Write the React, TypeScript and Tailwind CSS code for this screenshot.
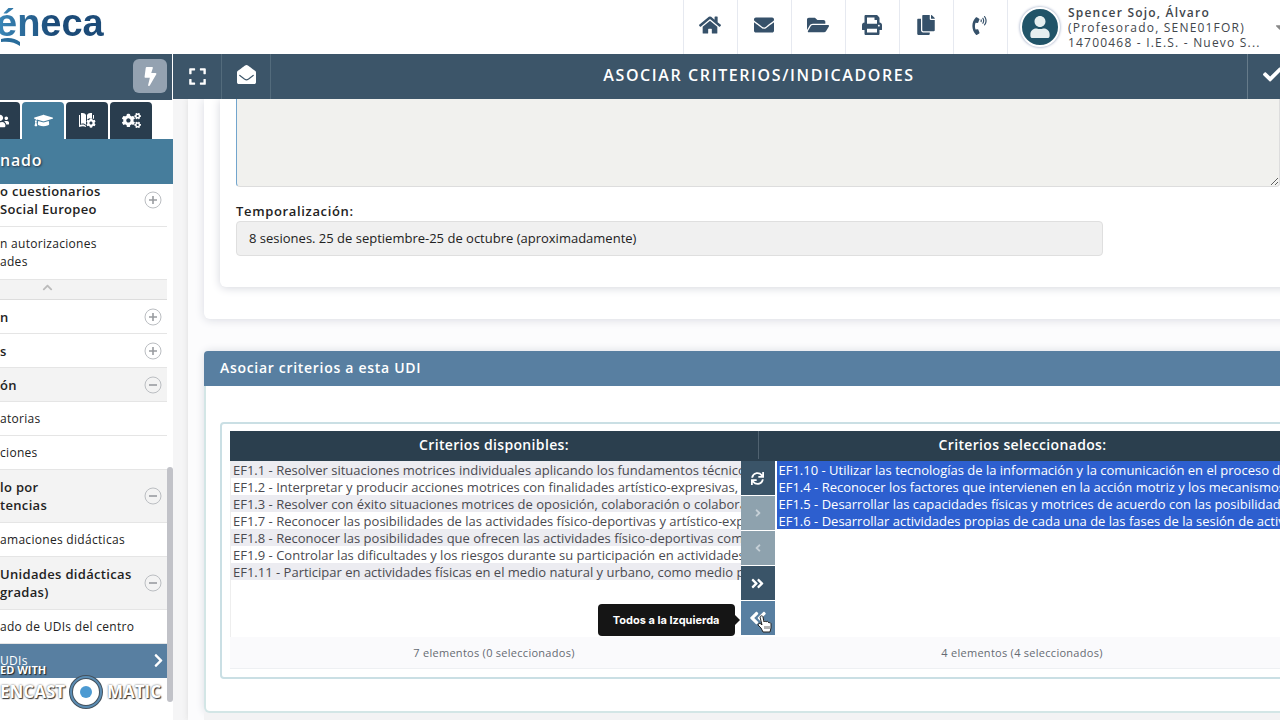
import { ReactNode, useState } from "react";
import {
  FaAngleDoubleLeft,
  FaAngleDoubleRight,
  FaAngleLeft,
  FaAngleRight,
  FaBolt,
  FaCaretDown,
  FaCheck,
  FaChevronRight,
  FaChevronUp,
  FaCog,
  FaCogs,
  FaCopy,
  FaEnvelope,
  FaEnvelopeOpen,
  FaExpand,
  FaFolderOpen,
  FaGraduationCap,
  FaHome,
  FaPhoneVolume,
  FaPrint,
  FaSync,
  FaUser,
  FaUsers,
} from "react-icons/fa";

type MenuItem = {
  lines: string[];
  kind: "group" | "open" | "link" | "active";
};

const topMenu: MenuItem[] = [
  { lines: ["o cuestionarios", "Social Europeo"], kind: "group" },
  { lines: ["n autorizaciones", "ades"], kind: "link" },
];

const mainMenu: MenuItem[] = [
  { lines: ["n"], kind: "group" },
  { lines: ["s"], kind: "group" },
  { lines: ["ón"], kind: "open" },
  { lines: ["atorias"], kind: "link" },
  { lines: ["ciones"], kind: "link" },
  { lines: ["lo por", "tencias"], kind: "open" },
  { lines: ["amaciones didácticas"], kind: "link" },
  { lines: ["Unidades didácticas", "gradas)"], kind: "open" },
  { lines: ["ado de UDIs del centro"], kind: "link" },
  { lines: ["UDIs"], kind: "active" },
];

const available = [
  "EF1.1 - Resolver situaciones motrices individuales aplicando los fundamentos técnicos",
  "EF1.2 - Interpretar y producir acciones motrices con finalidades artístico-expresivas,",
  "EF1.3 - Resolver con éxito situaciones motrices de oposición, colaboración o colaboración",
  "EF1.7 - Reconocer las posibilidades de las actividades físico-deportivas y artístico-expresivas",
  "EF1.8 - Reconocer las posibilidades que ofrecen las actividades físico-deportivas como",
  "EF1.9 - Controlar las dificultades y los riesgos durante su participación en actividades",
  "EF1.11 - Participar en actividades físicas en el medio natural y urbano, como medio para",
];

const chosen = [
  "EF1.10 - Utilizar las tecnologías de la información y la comunicación en el proceso de",
  "EF1.4 - Reconocer los factores que intervienen en la acción motriz y los mecanismos",
  "EF1.5 - Desarrollar las capacidades físicas y motrices de acuerdo con las posibilidades",
  "EF1.6 - Desarrollar actividades propias de cada una de las fases de la sesión de actividad",
];

const shortcuts = [
  { label: "Inicio", icon: <FaHome size={22} /> },
  { label: "Mensajes", icon: <FaEnvelope size={20} /> },
  { label: "Carpetas", icon: <FaFolderOpen size={22} /> },
  { label: "Imprimir", icon: <FaPrint size={20} /> },
  { label: "Copiar", icon: <FaCopy size={20} /> },
  { label: "Contacto", icon: <FaPhoneVolume size={19} /> },
];

export default function App() {
  return (
    <div className="relative flex h-screen flex-col overflow-hidden bg-white font-['Open_Sans','Noto_Sans',sans-serif] text-[13px] text-[#222]">
      <Header />
      <div className="flex min-h-0 flex-1">
        <Sidebar />
        <main className="flex min-w-0 flex-1 flex-col">
          <Toolbar />
          <Content />
        </main>
      </div>
      <Watermark />
    </div>
  );
}

function Header() {
  return (
    <header className="-mr-4 flex h-[54px] shrink-0 items-stretch">
      <a href="#inicio" aria-label="Séneca" className="relative block w-28">
        <span className="-ml-1 block bg-linear-to-r from-[#3b8abb] to-[#1c4b78] to-50% bg-clip-text font-['Liberation_Sans',sans-serif] text-[38px] leading-[46px] font-bold text-transparent">
          éneca
        </span>
        <svg
          viewBox="0 0 22 12"
          className="absolute top-9 left-0 h-3 w-6"
          fill="#286c9b"
        >
          <path d="M0 3C7 1 14 2 19 6l0 4C14 6 7 5 0 6z" />
        </svg>
      </a>
      <nav className="ml-auto flex text-[#36516a]">
        {shortcuts.map((item) => (
          <button
            key={item.label}
            aria-label={item.label}
            className="flex w-[54px] items-center justify-center border-l border-[#e6e9f0] pr-0.5 pb-1"
          >
            {item.icon}
          </button>
        ))}
      </nav>
      <button className="flex w-[289px] items-center border-l border-[#e6e9f0] pl-3 text-left">
        <span className="flex size-10 shrink-0 items-center justify-center rounded-full border-2 border-white bg-[#215468] text-[#e6efef] shadow-[0_0_3px_#8b99b8]">
          <FaUser size={22} />
        </span>
        <span className="ml-2 w-[197px] text-xs leading-[15px] tracking-widest whitespace-nowrap text-[#41464c]">
          <b className="block font-semibold">Spencer Sojo, Álvaro</b>
          <span className="block">(Profesorado, SENE01FOR)</span>
          <span className="block">14700468 - I.E.S. - Nuevo S...</span>
        </span>
        <FaCaretDown size={14} className="ml-2 text-[#888]" />
      </button>
    </header>
  );
}

function Toolbar() {
  return (
    <div className="-mr-4 flex h-[45px] shrink-0 items-stretch bg-[#3c5569] text-white">
      <button
        aria-label="Pantalla completa"
        className="flex w-[49px] items-center justify-center border-r border-[#536b7c]"
      >
        <FaExpand size={19} />
      </button>
      <button
        aria-label="Mensajes leídos"
        className="flex w-[49px] items-center justify-center border-r border-[#536b7c] pb-1"
      >
        <FaEnvelopeOpen size={19} />
      </button>
      <h1 className="flex-1 self-center pb-1 text-center text-base font-semibold tracking-widest">
        ASOCIAR CRITERIOS/INDICADORES
      </h1>
      <button
        aria-label="Aceptar"
        className="flex w-[49px] items-center justify-center border-l border-[#667b8a] pb-1"
      >
        <FaCheck size={19} />
      </button>
    </div>
  );
}

function Sidebar() {
  return (
    <aside className="flex w-[173px] shrink-0 flex-col overflow-hidden">
      <div className="flex h-[46px] shrink-0 items-center justify-end border-r border-white bg-[#3c5569] pr-[5px] pb-0.5">
        <button
          aria-label="Accesos rápidos"
          className="flex size-[34px] items-center justify-center rounded-md bg-[#94a2b1] text-white"
        >
          <FaBolt size={19} />
        </button>
      </div>
      <div className="mt-0.5 flex h-[37px] shrink-0 gap-0.5 text-white">
        <Tab label="Personal" narrow>
          <FaUsers size={18} className="-ml-5 shrink-0" />
        </Tab>
        <Tab label="Alumnado" selected>
          <FaGraduationCap size={19} />
        </Tab>
        <Tab label="Centro">
          <BookGear />
        </Tab>
        <Tab label="Utilidades">
          <FaCogs size={19} />
        </Tab>
      </div>
      <h2 className="flex h-[45px] shrink-0 items-center bg-[#467d9c] pb-1 text-base font-semibold tracking-wider text-white [text-shadow:1px_1px_2px_#234]">
        nado
      </h2>
      <div className="flex min-h-0 flex-1">
        <nav className="min-w-0 flex-1 overflow-hidden">
          <div className="-mt-2.5">
            {topMenu.map((item) => (
              <MenuRow key={item.lines[0]} item={item} />
            ))}
          </div>
          <button
            aria-label="Contraer"
            className="flex h-5 w-full items-center justify-center border-b border-[#ddd] bg-[#f3f3f3] pr-[72px] pb-1 text-[#bbb]"
          >
            <FaChevronUp size={11} />
          </button>
          {mainMenu.map((item) => (
            <MenuRow key={item.lines[0]} item={item} />
          ))}
        </nav>
        <div className="flex w-1.5 flex-col justify-end pb-[18px]">
          <div className="h-[235px] rounded-full bg-[#c1c2c8]" />
        </div>
      </div>
    </aside>
  );
}

function Tab({
  label,
  selected,
  narrow,
  children,
}: {
  label: string;
  selected?: boolean;
  narrow?: boolean;
  children: ReactNode;
}) {
  return (
    <button
      aria-label={label}
      className={`flex items-center justify-center rounded-t ${narrow ? "w-5 rounded-tl-none" : "w-[42px]"} ${selected ? "bg-[#467d9c]" : "bg-[#293d4e]"}`}
    >
      {children}
    </button>
  );
}

function BookGear() {
  return (
    <span className="relative block h-[18px] w-[18px]">
      <svg viewBox="0 0 18 18" className="h-full w-full" fill="currentColor">
        <path d="M1 3h1v10c3-1 5 0 6 1v1c-2-1-4-1-7 0zM3 1c2 0 4 0 5 2v10C7 12 5 11 3 12zM9 3c1-2 3-2 5-2v6c-3 0-5 2-5 5zM15 3h1v4h-1z" />
      </svg>
      <FaCog
        size={10}
        className="absolute right-0 bottom-0.5 rounded-full bg-[#293d4e]"
      />
    </span>
  );
}

function MenuRow({ item }: { item: MenuItem }) {
  const { lines, kind } = item;
  const bold = kind === "group" || kind === "open";
  return (
    <a
      href="#menu"
      className={`flex items-center justify-between border-b pr-[5px] leading-[18px] whitespace-nowrap ${lines.length > 1 ? "h-[53px]" : "h-[34px]"} ${bold ? "font-semibold tracking-wide" : "text-xs tracking-wide"} ${kind === "open" ? "bg-[#f3f3f3]" : ""} ${kind === "active" ? "border-[#587fa1] bg-[#587fa1] text-white" : "border-[#e5e5e5]"}`}
    >
      <span>
        {lines.map((line) => (
          <span key={line} className="block">
            {line}
          </span>
        ))}
      </span>
      {bold && <Expander open={kind === "open"} />}
      {kind === "active" && <FaChevronRight size={15} className="-mr-1" />}
    </a>
  );
}

function Expander({ open }: { open: boolean }) {
  return (
    <svg
      viewBox="0 0 18 18"
      className="size-[18px] shrink-0"
      fill="none"
      stroke="#999ca0"
    >
      <circle cx="9" cy="9" r="8" stroke="#bbbec2" />
      <path d={open ? "M5 9h8" : "M5 9h8M9 5v8"} strokeWidth="1.6" />
    </svg>
  );
}

function Content() {
  return (
    <div className="min-h-0 flex-1 overflow-hidden bg-[#f5f5f6] pl-[15px]">
      <div className="-mr-8 h-full bg-[#fcfcfd] pl-4 shadow-[0_0_6px_#ddd]">
        <section className="rounded-b-md bg-white px-4 pb-8 shadow-[0_1px_10px_#d9dbe2]">
          <div className="rounded-b-md bg-white px-4 pb-[31px] shadow-[0_1px_10px_#d4d6dd]">
            <textarea
              aria-label="Descripción"
              className="block h-[88px] w-full rounded-b border border-t-0 border-[#ddd] border-l-[#72a5cd] bg-[#f1f1ee]"
            />
            <label
              htmlFor="timing"
              className="mt-3.5 block leading-5 font-semibold tracking-wider"
            >
              Temporalización:
            </label>
            <input
              id="timing"
              defaultValue="8 sesiones. 25 de septiembre-25 de octubre (aproximadamente)"
              className="block h-[35px] w-full max-w-[867px] rounded-sm border border-[#dfdfdf] bg-[#f0f0f0] px-3 pb-0.5"
            />
          </div>
        </section>
        <section className="mt-8 rounded-md border-2 border-t-0 border-[#d3e6e6] bg-white pb-8 shadow-[0_0_8px_#d9dbe2]">
          <h2 className="-mx-0.5 flex h-[35px] items-center rounded-t bg-[#587fa1] pb-0.5 pl-4 text-sm font-semibold tracking-wider text-white">
            Asociar criterios a esta UDI
          </h2>
          <DualList />
        </section>
        <div className="h-4 bg-[#f3f3f4]" />
      </div>
    </div>
  );
}

function DualList() {
  const [picked, setPicked] = useState(chosen);
  return (
    <div className="mx-3.5 mt-9 rounded-sm border-2 border-[#cadfe4] p-2 pt-[7px]">
      <div className="grid grid-cols-2 bg-[#2b3f4e] pb-0.5 text-center text-sm leading-7 font-semibold tracking-wide text-white">
        <label htmlFor="available">Criterios disponibles:</label>
        <label htmlFor="chosen" className="border-l border-[#506270]">
          Criterios seleccionados:
        </label>
      </div>
      <div className="flex h-44">
        <select
          id="available"
          multiple
          defaultValue={[]}
          className="h-full min-w-0 flex-1 overflow-hidden border-l border-[#eee] text-[13px] text-[#4a4a50]"
        >
          {available.map((text) => (
            <option
              key={text}
              className="h-[17px] px-0.5 py-0 leading-[14px] odd:bg-[#ececf1]"
            >
              {text}
            </option>
          ))}
        </select>
        <div className="flex w-[34px] flex-col gap-px text-white">
          <MoveButton label="Recargar" tone="dark">
            <FaSync size={13} />
          </MoveButton>
          <MoveButton label="Derecha" tone="off">
            <FaAngleRight size={12} />
          </MoveButton>
          <MoveButton label="Izquierda" tone="off">
            <FaAngleLeft size={12} />
          </MoveButton>
          <MoveButton label="Todos a la Derecha" tone="dark">
            <FaAngleDoubleRight size={15} />
          </MoveButton>
          <div className="relative">
            <MoveButton label="Todos a la Izquierda" tone="hover">
              <FaAngleDoubleLeft size={20} />
            </MoveButton>
            <div
              role="tooltip"
              className="absolute top-[3px] right-10 rounded bg-[#151515] px-[15px] text-[11px] leading-8 font-bold whitespace-nowrap font-['Inter',sans-serif]"
            >
              Todos a la Izquierda
              <span className="absolute top-[11px] -right-[5px] border-y-[5px] border-l-[5px] border-y-transparent border-l-[#151515]" />
            </div>
            <HandCursor />
          </div>
        </div>
        <select
          id="chosen"
          multiple
          value={picked}
          onChange={(event) =>
            setPicked(
              Array.from(event.target.selectedOptions, (option) => option.value),
            )
          }
          className="ml-0.5 h-full min-w-0 flex-1 overflow-hidden text-[13px]"
        >
          {chosen.map((text) => (
            <option
              key={text}
              className="h-[17px] px-0.5 py-0 leading-[14px] checked:bg-linear-to-r checked:from-[#2d5fcf] checked:to-[#2d5fcf] checked:[-webkit-text-fill-color:white]"
            >
              {text}
            </option>
          ))}
        </select>
      </div>
      <div className="grid grid-cols-2 border-b border-[#eef0f3] bg-[#fafafc] text-center text-[11px] leading-[31px] tracking-wide text-[#666b73]">
        <p>7 elementos (0 seleccionados)</p>
        <p>4 elementos (4 seleccionados)</p>
      </div>
    </div>
  );
}

function MoveButton({
  label,
  tone,
  children,
}: {
  label: string;
  tone: "dark" | "off" | "hover";
  children: ReactNode;
}) {
  const tones = {
    dark: "bg-[#3a5468]",
    off: "bg-[#8ea2ae] text-[#c6d0d7]",
    hover: "bg-[#587fa1]",
  };
  return (
    <button
      aria-label={label}
      disabled={tone === "off"}
      className={`flex h-[34px] w-full items-center justify-center ${tones[tone]}`}
    >
      {children}
    </button>
  );
}

function HandCursor() {
  return (
    <svg
      viewBox="0 0 16 18"
      className="absolute top-3.5 left-4 h-[18px] w-4"
      fill="#fff"
      stroke="#222"
      strokeLinejoin="round"
    >
      <path d="M3 2c1-2 3-1 3 0l1 5c0-1 2-1 2 0 1-1 2-1 3 1 1-1 2 0 2 1v4l-1 4H6l-2-4-3-3c0-2 2-2 3-1l1 1z" />
      <path d="M8 11v3M10 11v3M12 11v3" strokeWidth="0.7" />
    </svg>
  );
}

function Watermark() {
  return (
    <div className="pointer-events-none absolute bottom-2.5 left-0 font-['Open_Sans',sans-serif] text-white">
      <p className="-mb-1 text-[11px] leading-4 font-bold [text-shadow:1px_1px_1px_#222]">
        ED WITH
      </p>
      <div className="flex items-center text-[17px] leading-9 font-bold [text-shadow:1px_1px_1px_#333,0_0_2px_#555]">
        <span className="w-[67px]">ENCAST</span>
        <svg viewBox="0 0 36 36" className="mx-px size-9">
          <circle cx="18" cy="18" r="15" fill="#fff" stroke="#44525e" strokeWidth="4" />
          <circle cx="18" cy="18" r="15" fill="none" stroke="#5b8db4" strokeWidth="2" />
          <circle cx="18" cy="18" r="6" fill="#4c9ad2" />
        </svg>
        <span className="ml-0.5">MATIC</span>
      </div>
    </div>
  );
}
